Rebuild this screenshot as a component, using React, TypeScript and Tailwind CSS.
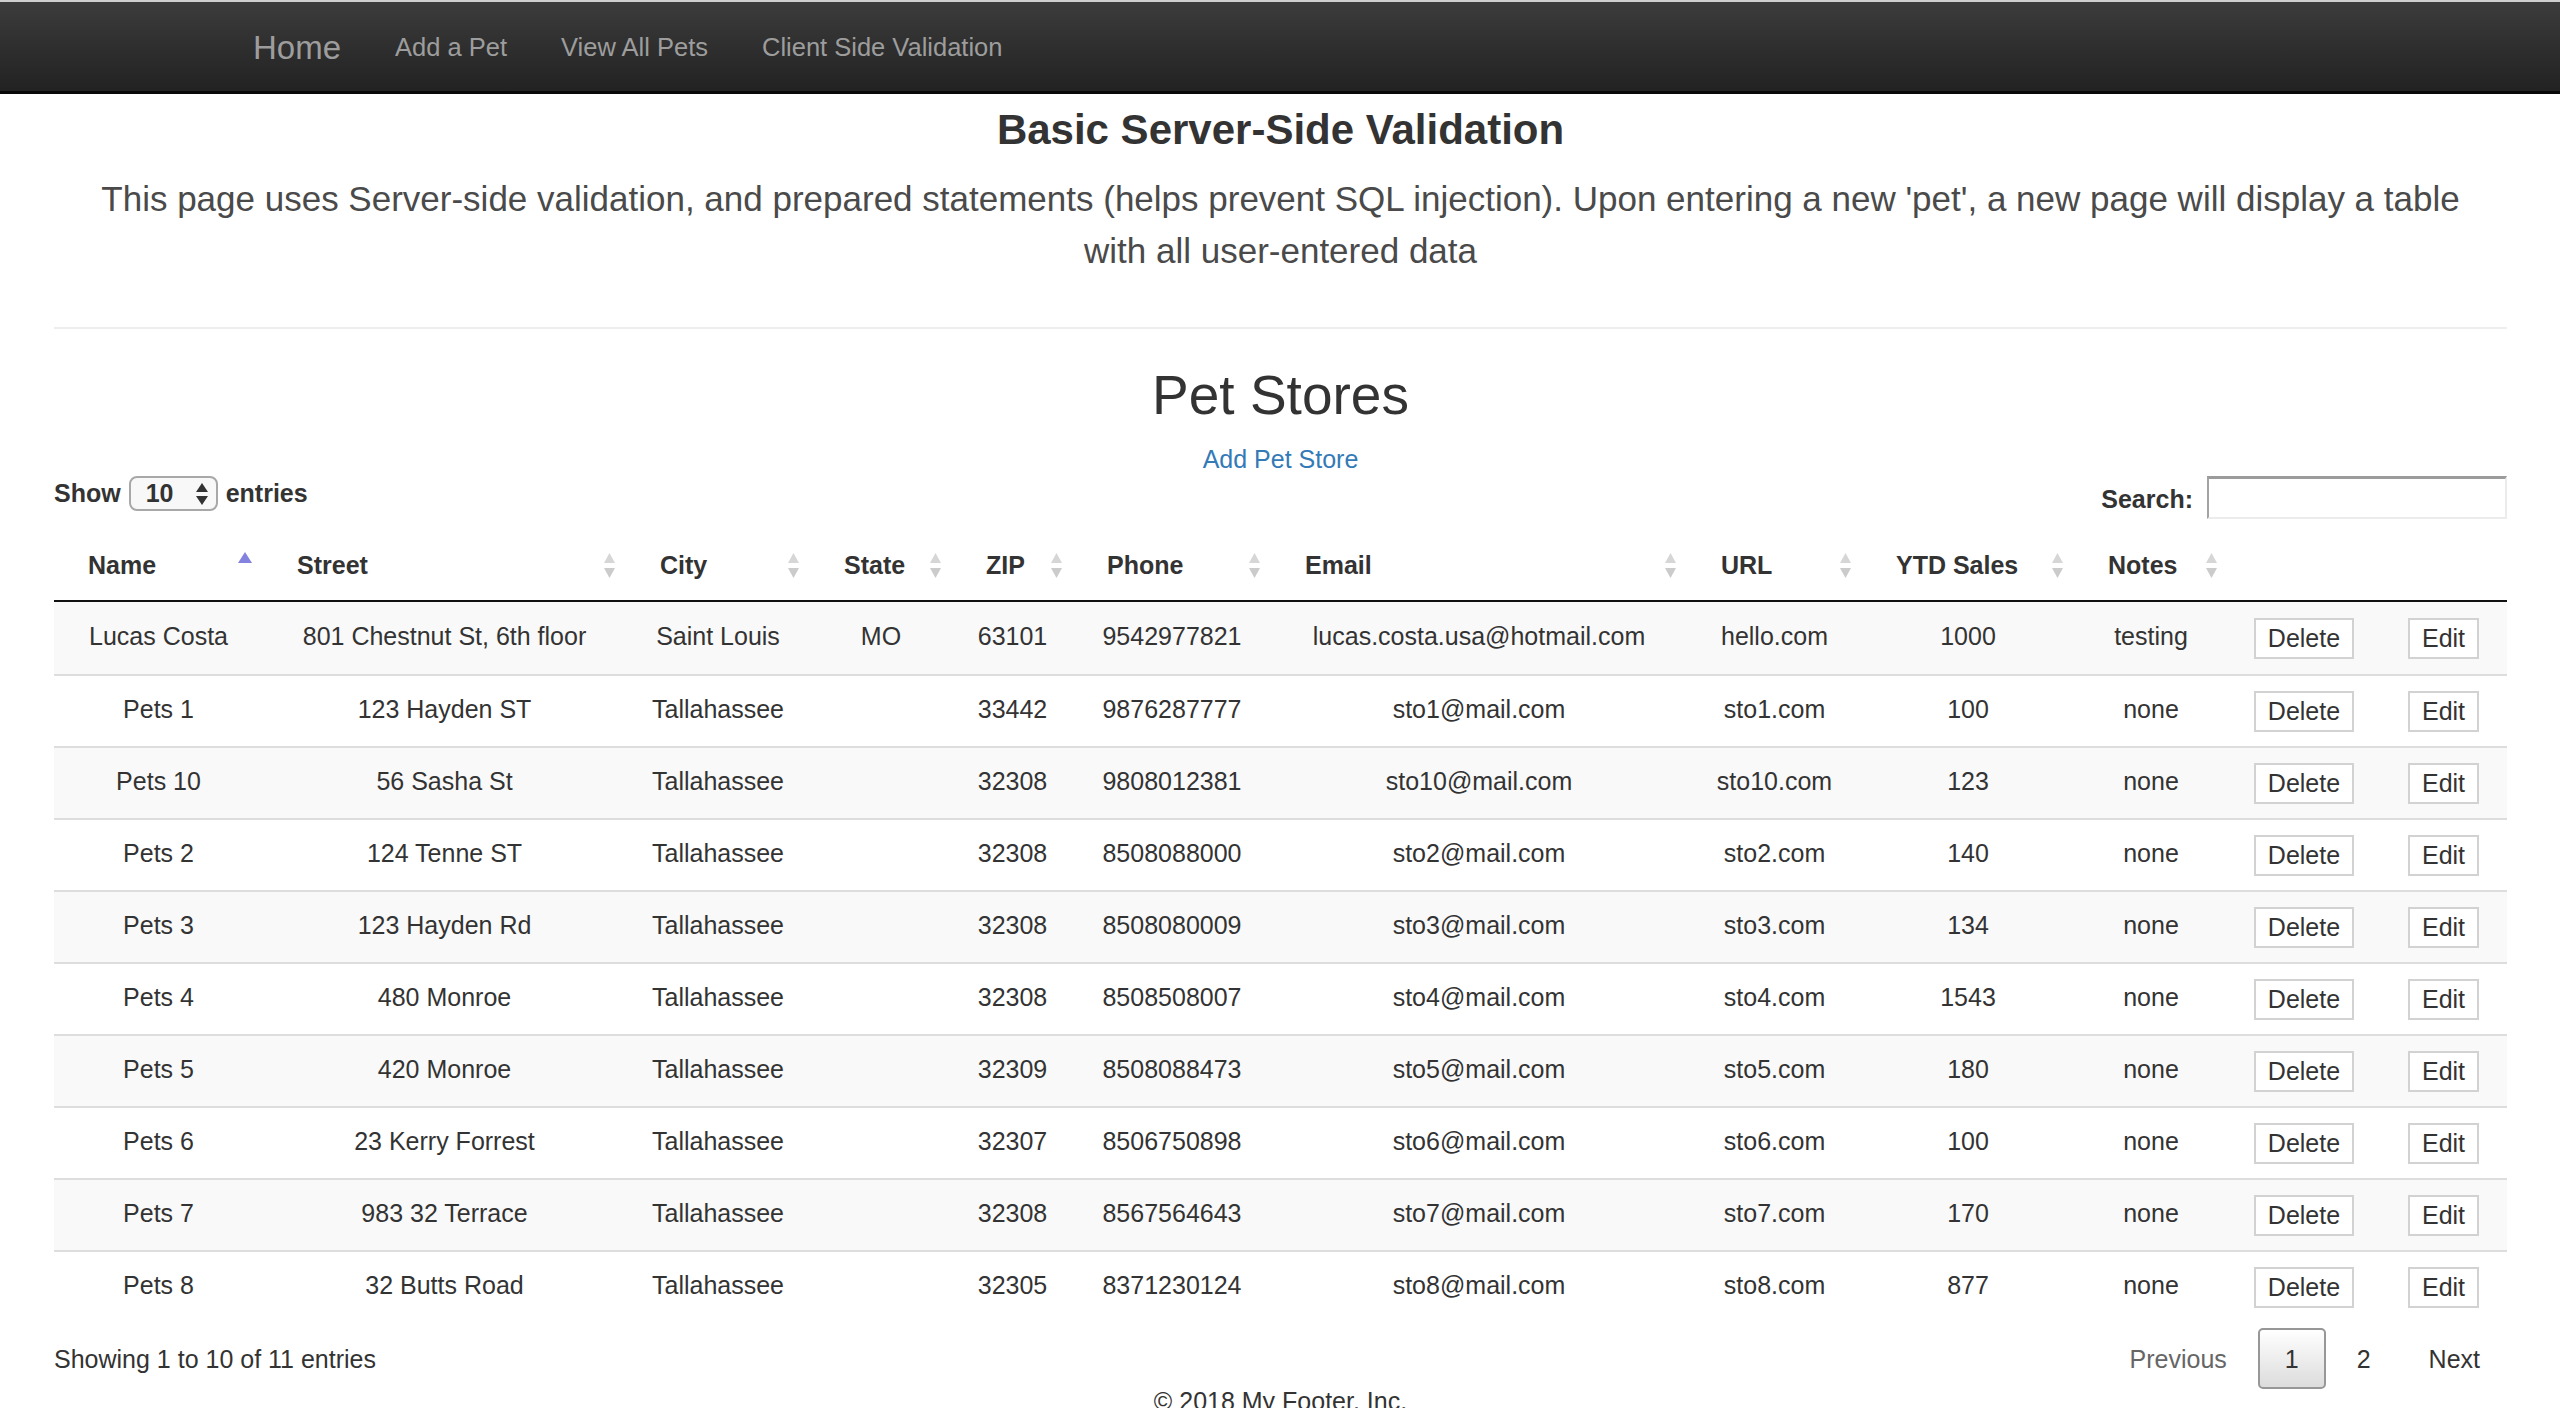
import React from "react";

// --- Table data ---
const STORES = [
  { name: "Lucas Costa", street: "801 Chestnut St, 6th floor", city: "Saint Louis", state: "MO", zip: "63101", phone: "9542977821", email: "lucas.costa.usa@hotmail.com", url: "hello.com", ytd: "1000", notes: "testing" },
  { name: "Pets 1", street: "123 Hayden ST", city: "Tallahassee", state: "", zip: "33442", phone: "9876287777", email: "sto1@mail.com", url: "sto1.com", ytd: "100", notes: "none" },
  { name: "Pets 10", street: "56 Sasha St", city: "Tallahassee", state: "", zip: "32308", phone: "9808012381", email: "sto10@mail.com", url: "sto10.com", ytd: "123", notes: "none" },
  { name: "Pets 2", street: "124 Tenne ST", city: "Tallahassee", state: "", zip: "32308", phone: "8508088000", email: "sto2@mail.com", url: "sto2.com", ytd: "140", notes: "none" },
  { name: "Pets 3", street: "123 Hayden Rd", city: "Tallahassee", state: "", zip: "32308", phone: "8508080009", email: "sto3@mail.com", url: "sto3.com", ytd: "134", notes: "none" },
  { name: "Pets 4", street: "480 Monroe", city: "Tallahassee", state: "", zip: "32308", phone: "8508508007", email: "sto4@mail.com", url: "sto4.com", ytd: "1543", notes: "none" },
  { name: "Pets 5", street: "420 Monroe", city: "Tallahassee", state: "", zip: "32309", phone: "8508088473", email: "sto5@mail.com", url: "sto5.com", ytd: "180", notes: "none" },
  { name: "Pets 6", street: "23 Kerry Forrest", city: "Tallahassee", state: "", zip: "32307", phone: "8506750898", email: "sto6@mail.com", url: "sto6.com", ytd: "100", notes: "none" },
  { name: "Pets 7", street: "983 32 Terrace", city: "Tallahassee", state: "", zip: "32308", phone: "8567564643", email: "sto7@mail.com", url: "sto7.com", ytd: "170", notes: "none" },
  { name: "Pets 8", street: "32 Butts Road", city: "Tallahassee", state: "", zip: "32305", phone: "8371230124", email: "sto8@mail.com", url: "sto8.com", ytd: "877", notes: "none" },
];

const COLUMNS = [
  { label: "Name", width: 209 },
  { label: "Street", width: 363 },
  { label: "City", width: 184 },
  { label: "State", width: 142 },
  { label: "ZIP", width: 121 },
  { label: "Phone", width: 198 },
  { label: "Email", width: 416 },
  { label: "URL", width: 175 },
  { label: "YTD Sales", width: 212 },
  { label: "Notes", width: 154 },
];

function SortIcon() {
  return (
    <svg width="11" height="25" viewBox="0 0 11 25" className="shrink-0">
      <path d="M0 10 L5.5 0 L11 10 Z" fill="#d6d6d6" />
      <path d="M0 15 L5.5 25 L11 15 Z" fill="#cbcbcb" />
    </svg>
  );
}

function SortAscIcon() {
  return (
    <svg width="14" height="11" viewBox="0 0 14 11" className="shrink-0 self-start mt-[5px]">
      <path d="M0 11 L7 0 L14 11 Z" fill="#8383df" />
    </svg>
  );
}

function CellButton({ label }: { label: string }) {
  return (
    <button className="h-[41px] px-[12px] border-2 border-[#d2d2d2] bg-white text-[25px] leading-[36px] text-[#333]">
      {label}
    </button>
  );
}

export default function App() {
  return (
    <div className="h-[1408px] overflow-hidden bg-white text-[#333] font-['Liberation_Sans',Arial,sans-serif]">
      {/* Navbar */}
      <nav className="h-[94px] border-t-2 border-t-[#cfcfcf] border-b-[3px] border-b-[#080808] bg-linear-to-b from-[#3c3c3c] to-[#222] flex items-center pl-[253px] gap-[54px] text-[#9d9d9d]">
        <span className="text-[33px] leading-[40px] pt-[3px]">Home</span>
        <span className="text-[25.5px] leading-[36px]">Add a Pet</span>
        <span className="text-[25.5px] leading-[36px]">View All Pets</span>
        <span className="text-[25.5px] leading-[36px]">Client Side Validation</span>
      </nav>

      <div className="pl-[54px] pr-[53px]">
        {/* Header */}
        <h3 className="mt-[11px] text-center text-[42px] leading-[50px] font-bold">Basic Server-Side Validation</h3>
        <p className="mx-auto mt-[18px] max-w-[2420px] text-center text-[35px] leading-[52px] text-[#4a4a4a]">
          This page uses Server-side validation, and prepared statements (helps prevent SQL injection). Upon entering a new 'pet', a new page will display a table with all user-entered data
        </p>
        <div className="mt-[50px] h-[2px] bg-[#eee]" />

        <h2 className="mt-[34px] text-center text-[55px] leading-[64px]">Pet Stores</h2>
        <div className="mt-[14px] text-center text-[25px] leading-[36px]">
          <a href="#" className="text-[#337ab7]">Add Pet Store</a>
        </div>

        {/* Length + search controls */}
        <div className="-mt-px flex justify-between items-start">
          <div className="flex items-center gap-[8px] h-[35px] text-[25px] font-bold">
            <span>Show</span>
            <div className="w-[89px] h-[35px] rounded-[8px] border-2 border-[#a8a8a8] bg-[#f8f8f8] flex items-center justify-between pl-[15px] pr-[8px]">
              <span>10</span>
              <svg width="12" height="22" viewBox="0 0 12 22">
                <path d="M0 9 L6 0 L12 9 Z" fill="#333" />
                <path d="M0 13 L6 22 L12 13 Z" fill="#333" />
              </svg>
            </div>
            <span>entries</span>
          </div>
          <div className="flex items-center gap-[14px] h-[43px] text-[25px] font-bold">
            <span className="pt-[4px]">Search:</span>
            <input
              type="text"
              className="w-[300px] h-[43px] border-2 border-t-[3px] border-t-[#9b9b9b] border-l-[#a3a3a3] border-r-[#ececec] border-b-[#ececec] bg-white outline-none"
            />
          </div>
        </div>

        {/* Table */}
        <table className="mt-[11px] w-full table-fixed border-separate border-spacing-0 text-[25px] leading-[36px]">
          <colgroup>
            {COLUMNS.map((c) => (
              <col key={c.label} style={{ width: c.width }} />
            ))}
            <col style={{ width: 152 }} />
            <col style={{ width: 127 }} />
          </colgroup>
          <thead>
            <tr>
              {COLUMNS.map((c, i) => (
                <th key={c.label} className="h-[72px] align-top pt-[17px] pl-[34px] pr-[11px] border-b-2 border-[#111] text-left font-bold">
                  <div className="flex items-center justify-between h-[36px] whitespace-nowrap">
                    <span>{c.label}</span>
                    {i === 0 ? <SortAscIcon /> : <SortIcon />}
                  </div>
                </th>
              ))}
              <th className="border-b-2 border-[#111]" />
              <th className="border-b-2 border-[#111]" />
            </tr>
          </thead>
          <tbody>
            {STORES.map((s, i) => {
              const base =
                "h-[72px] px-[4px] align-middle text-center whitespace-nowrap " +
                (i === 0 ? "" : "border-t-2 border-[#ddd] ") +
                (i % 2 === 0 ? "bg-[#f9f9f9]" : "bg-white");
              const td = base + " pt-0 pb-[5px]";
              const btn = base + " py-0";
              return (
                <tr key={s.name}>
                  <td className={td}>{s.name}</td>
                  <td className={td}>{s.street}</td>
                  <td className={td}>{s.city}</td>
                  <td className={td}>{s.state}</td>
                  <td className={td}>{s.zip}</td>
                  <td className={td}>{s.phone}</td>
                  <td className={td}>{s.email}</td>
                  <td className={td}>{s.url}</td>
                  <td className={td}>{s.ytd}</td>
                  <td className={td}>{s.notes}</td>
                  <td className={btn}>
                    <CellButton label="Delete" />
                  </td>
                  <td className={btn}>
                    <CellButton label="Edit" />
                  </td>
                </tr>
              );
            })}
          </tbody>
        </table>

        {/* Info + pagination */}
        <div className="mt-[6px] flex items-center justify-between h-[61px] text-[25px] leading-[36px]">
          <div>Showing 1 to 10 of 11 entries</div>
          <div className="flex items-center">
            <span className="ml-[4px] h-[61px] px-[25px] flex items-center border-2 border-transparent text-[#666]">Previous</span>
            <span className="ml-[4px] h-[61px] px-[25px] flex items-center border-2 border-[#979797] rounded-[5px] bg-linear-to-b from-white to-[#dcdcdc]">1</span>
            <span className="ml-[4px] h-[61px] px-[25px] flex items-center border-2 border-transparent">2</span>
            <span className="ml-[4px] h-[61px] px-[25px] flex items-center border-2 border-transparent">Next</span>
          </div>
        </div>

        {/* Footer */}
        <footer className="-mt-[6px] text-center text-[25px] leading-[36px]">© 2018 My Footer, Inc.</footer>
      </div>
    </div>
  );
}
